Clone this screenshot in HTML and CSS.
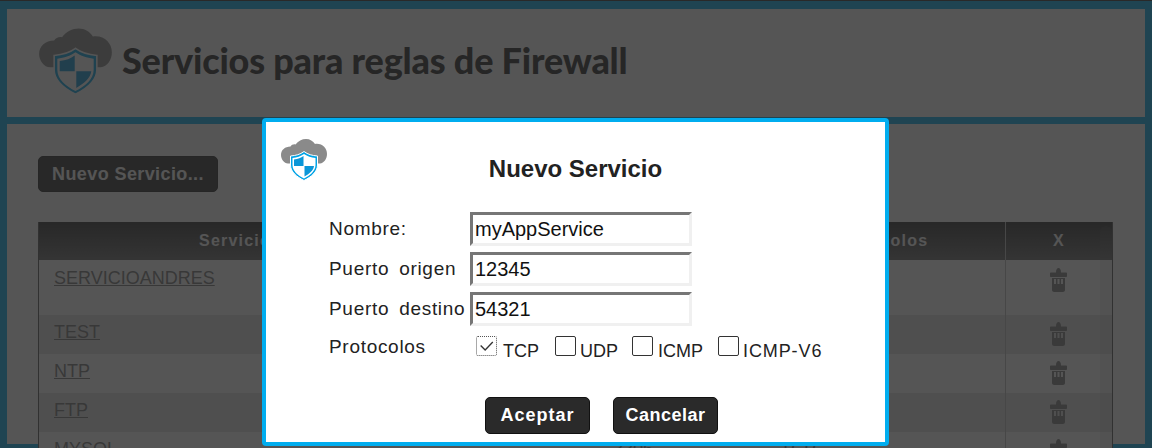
FILE: index.html
```html
<!DOCTYPE html>
<html lang="es">
<head>
    <meta charset="UTF-8">
    <meta name="viewport" content="width=device-width, initial-scale=1.0">
    <title>Servicios para reglas de Firewall</title>
    <link rel="stylesheet" href="styles.css">
</head>
<body>

<svg class="defs" width="0" height="0">
    <symbol id="logo" viewBox="0 0 46 43">
        <path fill="#8a8a8a" d="M7 25.500 C3 25.500 0 21 0 17 C0 12 4 8.500 9.500 8.500 C10.500 7 12.500 6 14.500 6.500 C17 3 21 1 25 1 C29 1 32 3 34 6 C41 5 46 10 46 16 C46 21 43 25 39 25.500Z"/>
        <path fill="#00a3e6" stroke="#fff" stroke-width="1" d="M23 13.500 C27 16.500 31 17.500 36.500 18 V27 C36.500 34 30 39 23 42.500 C16 39 9.500 34 9.500 27 V18 C15 17.500 19 16.500 23 13.500Z"/>
        <path fill="#fff" d="M23 16 C26.500 18.500 30 19.500 34.500 20 V27 C34.500 33 29 37.500 23 40.500 C17 37.500 11.500 33 11.500 27 V20 C16 19.500 19.500 18.500 23 16Z"/>
        <path fill="#0a96d8" d="M22.500 18 V28 H13 V21.500 C17 21 20 20 22.500 18Z M23.500 28 H33 C32.500 32.500 28 36 23.500 38.500Z"/>
    </symbol>
    <symbol id="trash" viewBox="0 0 17 24">
        <path fill="#808080" fill-rule="evenodd" d="M6 4.500 C6 1.500 7 0 8.500 0 C10 0 11 1.500 11 4.500 H16 C16.600 4.500 17 4.900 17 5.500 V8 C17 8.600 16.600 9 16 9 H1 C0.400 9 0 8.600 0 8 V5.500 C0 4.900 0.400 4.500 1 4.500Z M2 10 H15 V22 C15 23 14 24 13 24 H4 C3 24 2 23 2 22Z M4 11 V16 H6 V11Z M7.500 11 V16 H9.500 V11Z M11 11 V16 H13 V11Z"/>
    </symbol>
</svg>

<div class="page">
    <header class="top-panel">
        <svg class="logo-big"><use href="#logo"/></svg>
        <h1>Servicios para reglas de Firewall</h1>
    </header>

    <main class="content">
        <button class="new-button">Nuevo Servicio...</button>

        <div class="table-box">
            <table class="services">
                <colgroup>
                    <col class="col-name">
                    <col class="col-port">
                    <col class="col-port">
                    <col class="col-proto">
                    <col class="col-del">
                </colgroup>
                <thead>
                    <tr>
                        <th>Servicio</th>
                        <th>Puerto origen</th>
                        <th>Puerto destino</th>
                        <th class="th-proto">Protocolos</th>
                        <th>X</th>
                    </tr>
                </thead>
                <tbody>
                    <tr class="tall">
                        <td><a href="#">SERVICIOANDRES</a></td><td></td><td></td><td></td>
                        <td><svg class="trash"><use href="#trash"/></svg></td>
                    </tr>
                    <tr class="alt">
                        <td><a href="#">TEST</a></td><td></td><td></td><td></td>
                        <td><svg class="trash"><use href="#trash"/></svg></td>
                    </tr>
                    <tr>
                        <td><a href="#">NTP</a></td><td></td><td></td><td></td>
                        <td><svg class="trash"><use href="#trash"/></svg></td>
                    </tr>
                    <tr class="alt">
                        <td><a href="#">FTP</a></td><td></td><td></td><td></td>
                        <td><svg class="trash"><use href="#trash"/></svg></td>
                    </tr>
                    <tr>
                        <td><a href="#">MYSQL</a></td><td></td><td>3306</td><td>TCP</td>
                        <td><svg class="trash"><use href="#trash"/></svg></td>
                    </tr>
                </tbody>
            </table>
            <div class="scroll-strip"></div>
        </div>
    </main>
</div>

<div class="overlay"></div>

<div class="dialog">
    <div class="dialog-head">
        <svg class="logo-small"><use href="#logo"/></svg>
        <h2>Nuevo Servicio</h2>
    </div>
    <form class="dialog-form">
        <label>Nombre:</label>
        <input type="text" value="myAppService">
        <label>Puerto origen</label>
        <input type="text" value="12345">
        <label>Puerto destino</label>
        <input type="text" value="54321">
        <label class="proto-label">Protocolos</label>
        <div class="protocols">
            <span class="box checked">
                <svg viewBox="0 0 20 20"><path fill="none" stroke="#333" stroke-width="1.500" d="M3.500 9.500 L8.500 14.500 L17 5.500"/></svg>
            </span>
            <span class="proto proto-tcp">TCP</span>
            <span class="box"></span>
            <span class="proto proto-udp">UDP</span>
            <span class="box"></span>
            <span class="proto proto-icmp">ICMP</span>
            <span class="box"></span>
            <span class="proto proto-v6">ICMP-V6</span>
        </div>
    </form>
    <div class="dialog-buttons">
        <button class="dark-button accept">Aceptar</button>
        <button class="dark-button cancel">Cancelar</button>
    </div>
</div>

</body>
</html>
```

FILE: styles.css
```css
html, body {
    height: 100%;
}
body {
    margin: 0;
    overflow: hidden;
    font-family: 'Liberation Sans', Arial, sans-serif;
    background: #00adef;
    color: #333;
}
.defs {
    position: absolute;
}
.page {
    height: 448px;
    box-sizing: border-box;
    border-top: 1px solid #333;
    padding: 8px 7px 0;
    overflow: hidden;
}
.top-panel {
    height: 108px;
    background: #fff;
    display: flex;
    align-items: center;
    padding-left: 32px;
    margin-bottom: 7px;
}
.logo-big {
    width: 73px;
    height: 68px;
    margin-top: -4px;
}
.top-panel h1 {
    margin: -6px 0 0 10px;
    font-family: Lato, sans-serif;
    font-size: 36px;
    font-weight: 900;
    letter-spacing: -0.2px;
    color: #222;
}
.content {
    background: #fff;
    padding: 32px 32px 0 31px;
    height: 320px;
    box-sizing: border-box;
}
.new-button {
    display: block;
    width: 180px;
    height: 36px;
    padding: 0;
    background: #2a2a2a;
    border: 1px solid #222;
    border-radius: 5px;
    color: #fff;
    font-family: 'Liberation Sans', Arial, sans-serif;
    font-size: 18px;
    font-weight: bold;
    letter-spacing: 0.4px;
}
.table-box {
    position: relative;
    margin-top: 30px;
    width: 1075px;
}
.services {
    width: 1075px;
    table-layout: fixed;
    border-collapse: separate;
    border-spacing: 0;
    border-left: 1px solid #555;
    border-right: 1px solid #555;
}
.col-name { width: 392px; }
.col-port { width: 167px; }
.col-proto { width: 240px; }
.col-del { width: 107px; }
.services th {
    height: 38px;
    padding: 0;
    background: linear-gradient(#2a2a2a, #666);
    color: #fff;
    font-size: 16px;
    letter-spacing: 1.2px;
}
.services th.th-proto {
    padding-right: 9px;
}
.services th:last-child,
.services td:last-child {
    border-left: 1px solid #bbb;
    text-align: center;
}
.services td {
    height: 39px;
    box-sizing: border-box;
    padding: 7px 15px 0;
    vertical-align: top;
    font-size: 18px;
    color: #777;
    background: #fff;
}
.services tr.tall td {
    height: 55px;
    padding-top: 8px;
}
.services tr.alt td {
    background: #e4e4e4;
}
.services a {
    color: #777;
}
.services td:last-child {
    padding: 7px 1px 0 0;
}
.services tr.tall td:last-child {
    padding-top: 8px;
}
.trash {
    display: inline-block;
    width: 17px;
    height: 24px;
}
.scroll-strip {
    position: absolute;
    top: 4px;
    right: 1px;
    bottom: 0;
    width: 12px;
    border-radius: 6px 6px 0 0;
    background: rgba(128, 128, 128, 0.12);
}
.overlay {
    position: absolute;
    inset: 0;
    background: rgba(39, 39, 39, 0.79);
}
.dialog {
    position: absolute;
    left: 262px;
    top: 118px;
    width: 627px;
    height: 328px;
    box-sizing: border-box;
    background: #fff;
    border: 4px solid #00adef;
    border-radius: 4px;
    padding: 16px 15px 0;
    color: #222;
}
.dialog-head {
    display: grid;
    grid-template-columns: 46px 1fr 46px;
    height: 74px;
}
.logo-small {
    width: 46px;
    height: 43px;
}
.dialog-head h2 {
    margin: 16px 0 0;
    font-size: 24px;
    line-height: 30px;
    text-align: center;
}
.dialog-form {
    display: grid;
    grid-template-columns: 140px 222px;
    grid-auto-rows: 34px;
    row-gap: 6px;
    margin-left: 49px;
    align-items: center;
    font-size: 18px;
}
.dialog-form label {
    font-size: 19px;
    word-spacing: 4px;
    letter-spacing: 0.7px;
    margin: 0 0 0 -1px;
}
.dialog-form input {
    box-sizing: border-box;
    width: 222px;
    height: 34px;
    padding: 0 2px;
    border: 3px solid;
    border-color: #767676 #f0f0f0 #f0f0f0 #767676;
    font-family: 'Liberation Sans', Arial, sans-serif;
    font-size: 20px;
    color: #111;
    outline: none;
}
.dialog-form .proto-label {
    margin-top: -4px;
}
.protocols {
    display: flex;
    align-items: center;
    width: 360px;
    margin-left: 6px;
    font-size: 18px;
}
.box {
    width: 21px;
    height: 20px;
    box-sizing: border-box;
    border: 1px solid #333;
    border-radius: 2px;
    flex: none;
    margin-bottom: 6px;
}
.box.checked {
    border: 1px dotted #555;
}
.box svg {
    display: block;
    width: 19px;
    height: 18px;
}
.proto {
    margin-top: 4px;
}
.proto-tcp { margin-left: 6px; width: 52px; }
.proto-udp { margin-left: 4px; width: 52px; }
.proto-icmp { margin-left: 5px; width: 60px; }
.proto-v6 { margin-left: 4px; letter-spacing: 0.9px; }
.dialog-buttons {
    display: flex;
    gap: 23px;
    margin: 31px 0 0 204px;
}
.dark-button {
    width: 105px;
    height: 37px;
    padding: 0;
    background: #2a2a2a;
    border: 1px solid #111;
    border-radius: 5px;
    color: #fff;
    font-family: 'Liberation Sans', Arial, sans-serif;
    font-size: 18px;
    font-weight: bold;
    letter-spacing: 0.5px;
}
.dark-button.accept {
    letter-spacing: 1px;
}
```
